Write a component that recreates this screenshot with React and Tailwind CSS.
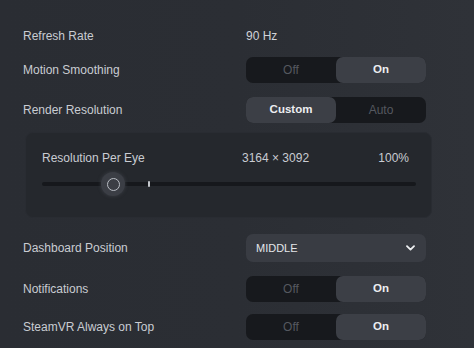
import React from "react";

const font = { fontFamily: '"Liberation Sans", Arial, sans-serif' };

function Toggle({ left, right, active }) {
  const on = "flex-1 flex items-center justify-center rounded-[7px] bg-[#3c3f46] text-[#eceef1] font-bold text-[11.5px]";
  const off = "flex-1 flex items-center justify-center text-[#55585f] text-[12px]";
  return (
    <div className="flex w-[180px] h-[26px] rounded-[7px] bg-[#17191d]">
      <div className={active === 0 ? on : off}>{left}</div>
      <div className={active === 1 ? on : off}>{right}</div>
    </div>
  );
}

function Row({ label, children, className = "" }) {
  return (
    <div className={"flex items-center " + className}>
      <div className="w-[223px] text-[12px] text-[#c9ccd2]">{label}</div>
      {children}
    </div>
  );
}

export default function App() {
  return (
    <div
      className="w-[474px] h-[348px] overflow-hidden bg-gradient-to-r from-[#2a2d33] via-[#2b2e34] to-[#2f3238] pl-[23px] pt-[23px]"
      style={font}
    >
      <Row label="Refresh Rate" className="h-[26px]">
        <div className="text-[12px] text-[#d0d3d8]">90 Hz</div>
      </Row>
      <Row label="Motion Smoothing" className="h-[26px] mt-[8px]">
        <Toggle left="Off" right="On" active={1} />
      </Row>
      <Row label="Render Resolution" className="h-[26px] mt-[14px]">
        <Toggle left="Custom" right="Auto" active={0} />
      </Row>

      <div className="ml-[2px] mt-[9px] w-[407px] h-[86px] rounded-[8px] bg-[#25282d] border border-[#292c32] pl-[16px] pr-[16px] pt-[16px]">
        <div className="flex items-center h-[18px] text-[12px] text-[#c9ccd2] pr-[6px]">
          <div className="w-[200px]">Resolution Per Eye</div>
          <div>3164 × 3092</div>
          <div className="ml-auto">100%</div>
        </div>
        <div className="relative mt-[15px] h-[4px] w-[374px] rounded-full bg-[#16181c]">
          <div className="absolute left-[59px] top-[-10px] w-[24px] h-[24px] rounded-full bg-[#3b3e45] shadow-[0_0_3px_1px_rgba(60,63,70,0.6)] flex items-center justify-center">
            <div className="w-[13px] h-[13px] rounded-full border-[1.5px] border-[#b9bdc4]" />
          </div>
          <div className="absolute left-[106px] top-[-1px] w-[2px] h-[6px] rounded-[1px] bg-[#c4c7cc]" />
        </div>
      </div>

      <Row label="Dashboard Position" className="h-[28px] mt-[16px]">
        <div className="flex items-center w-[180px] h-[28px] rounded-[7px] bg-[#393c43] pl-[10px] pr-[11px]">
          <span className="text-[11px] text-[#e4e6e9]">MIDDLE</span>
          <svg className="ml-auto" width="9" height="6" viewBox="0 0 9 6" fill="none">
            <path d="M1 1.2 L4.5 4.6 L8 1.2" stroke="#eef0f2" strokeWidth="1.8" strokeLinecap="round" strokeLinejoin="round" />
          </svg>
        </div>
      </Row>
      <Row label="Notifications" className="h-[26px] mt-[14px]">
        <Toggle left="Off" right="On" active={1} />
      </Row>
      <Row label="SteamVR Always on Top" className="h-[26px] mt-[12px]">
        <Toggle left="Off" right="On" active={1} />
      </Row>
    </div>
  );
}
